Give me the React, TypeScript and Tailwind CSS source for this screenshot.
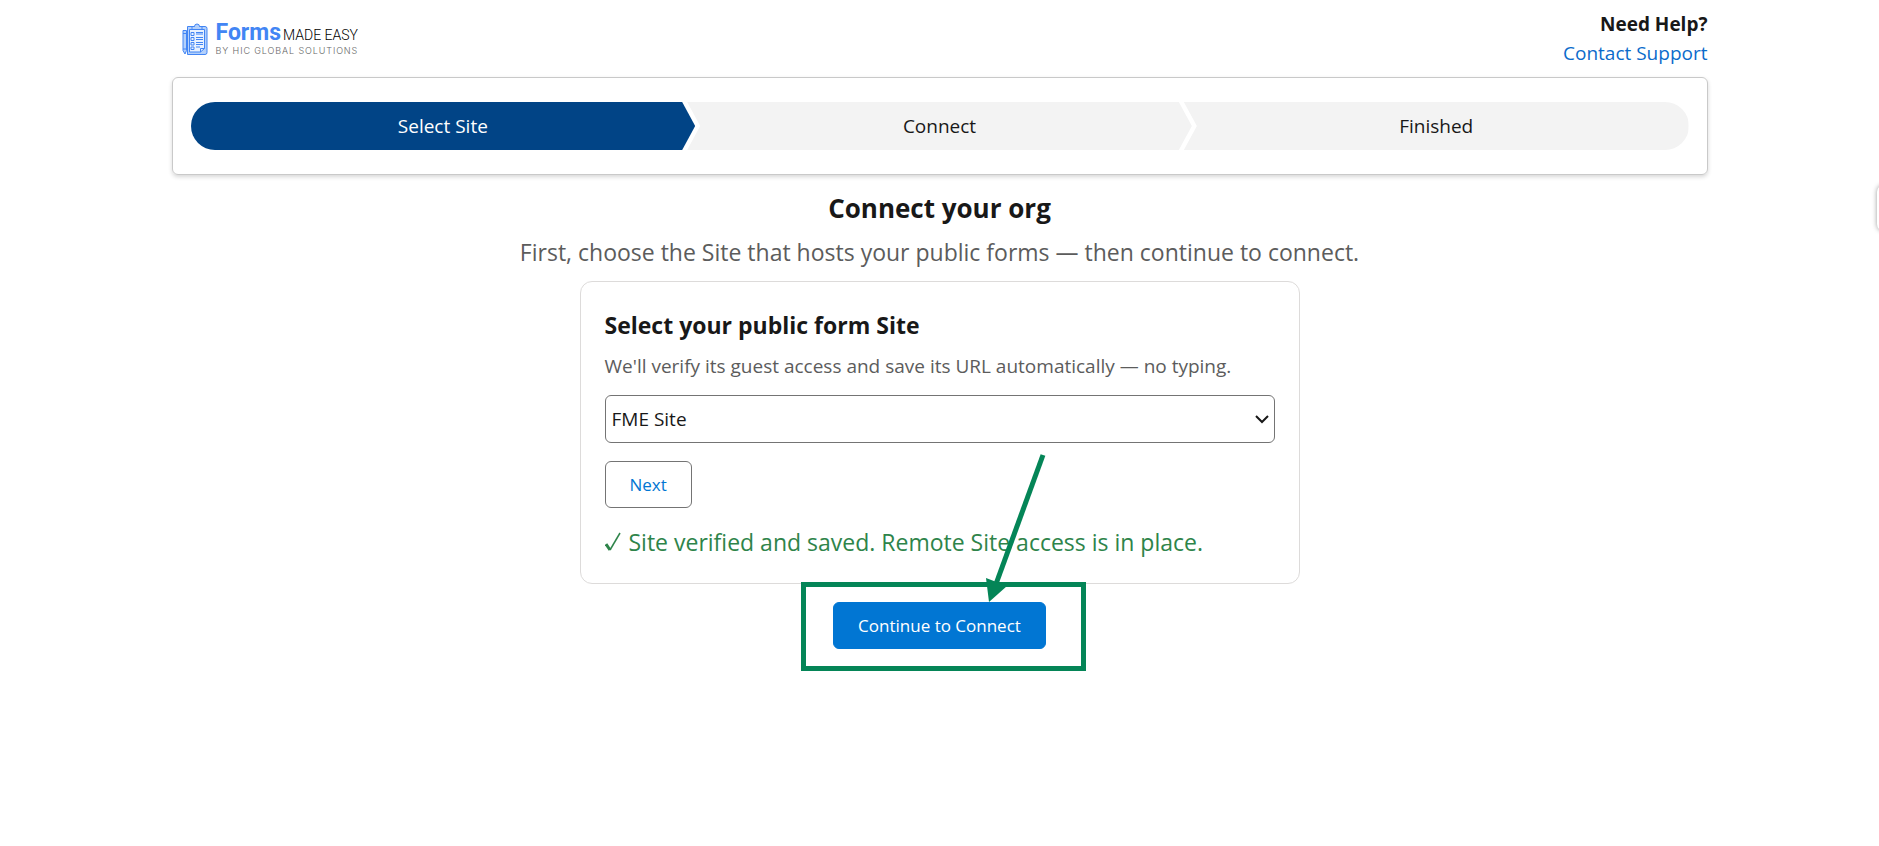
const steps = ["Select Site", "Connect", "Finished"];

const shapes = [
  "rounded-l-full bg-[#014486] text-white [clip-path:polygon(0_0,calc(100%-13px)_0,100%_50%,calc(100%-13px)_100%,0_100%)]",
  "-ml-2 bg-[#f3f3f3] text-[#181818] [clip-path:polygon(0_0,calc(100%-13px)_0,100%_50%,calc(100%-13px)_100%,0_100%,13px_50%)]",
  "-ml-2 rounded-r-full bg-[#f3f3f3] text-[#181818] [clip-path:polygon(0_0,100%_0,100%_100%,0_100%,13px_50%)]",
];

const Logo = () => {
  return (
    <a href="#" className="flex items-center gap-2">
      <svg width="26" height="33" viewBox="0 0 26 33" fill="none" stroke="#4285f4" aria-hidden="true">
        <path d="M5.500 3.500H23a2 2 0 0 1 2 2v24a2 2 0 0 1-2 2H5.500z" fill="#b3d0fb" />
        <path d="M7.500 6.500h15v19l-4 3.500h-11z" fill="#e8f1fe" />
        <path d="M18.500 29v-3.500h4" />
        <path d="M10 5.500v-2h2.500a2.500 2.500 0 0 1 5 0H20v3H10z" fill="#b3d0fb" />
        <path d="M1 7.500h3.500v20L3 31l-2-3.500z" fill="#b3d0fb" />
        <path d="M1 10.500h3.500M1 26h3.500" />
        <path d="M9 9.500h3v3H9zM9 14.500h3v3H9zM9 19.500h3v2.500H9zM9 24h3v2.500H9z" />
        <path d="M14 9.500h7M14 11h7M14 14.500h7M14 16.500h7M14 19.500h7M14 21.500h7M14 24h4" />
      </svg>
      <span className="font-['Roboto']">
        <span className="flex items-baseline gap-0.5 leading-6">
          <span className="text-[23px] font-bold text-[#4285f4]">Forms</span>
          <span className="text-sm font-light text-black">MADE EASY</span>
        </span>
        <span className="block font-['Inter'] text-[9px] leading-3 font-light tracking-widest text-[#666]">
          BY HIC GLOBAL SOLUTIONS
        </span>
      </span>
    </a>
  );
};

const App = () => {
  return (
    <div className="relative min-h-screen overflow-x-clip bg-white font-['Open_Sans','Noto_Sans',sans-serif] text-[#181818]">
      <div className="mx-auto max-w-[1536px]">
        <header className="flex items-center justify-between pt-2.5 pb-[9px]">
          <div className="pl-2.5">
            <Logo />
          </div>
          <div className="text-right text-[19px] leading-[29px]">
            <p className="font-bold">Need Help?</p>
            <a href="#" className="text-[#0b6bcb]">
              Contact Support
            </a>
          </div>
        </header>

        <nav className="rounded-md border border-[#c9c9c9] px-[18px] py-6 shadow-[0_2px_4px_rgba(0,0,0,0.16)]">
          <ol className="flex">
            {steps.map((step, i) => (
              <li key={step} className={`flex h-12 flex-1 items-center justify-center text-[19px] ${shapes[i]}`}>
                {step}
              </li>
            ))}
          </ol>
        </nav>

        <main className="flex flex-col items-center pt-[15px]">
          <h1 className="text-[26px] leading-9 font-bold">Connect your org</h1>
          <p className="mt-2.5 mb-[13px] text-[23px] leading-8 text-[#5c5c5c]">
            First, choose the Site that hosts your public forms — then continue to connect.
          </p>

          <section className="w-full max-w-[720px] rounded-xl border border-[#dddbda] px-6 pt-[23px] pb-[23px]">
            <h2 className="text-[23px] leading-10 font-bold">Select your public form Site</h2>
            <label htmlFor="site" className="mt-1 block text-[19px] leading-[34px] text-[#5c5c5c]">
              We'll verify its guest access and save its URL automatically — no typing.
            </label>
            <div className="relative mt-3">
              <select
                id="site"
                className="block h-12 w-full appearance-none rounded-md border border-[#747474] bg-white px-1.5 text-[19px]"
              >
                <option>FME Site</option>
              </select>
              <svg
                className="pointer-events-none absolute top-5 right-1.5"
                width="14"
                height="9"
                viewBox="0 0 14 9"
                fill="none"
                stroke="#181818"
                strokeWidth="2"
                aria-hidden="true"
              >
                <path d="M1 1l6 6 6-6" />
              </svg>
            </div>
            <button className="mt-[18px] block h-[47px] rounded-md border border-[#747474] px-6 text-[17px] text-[#0176d3]">
              Next
            </button>
            <p className="mt-4 flex items-center gap-2 text-[23px] leading-9 text-[#2e844a]">
              <svg width="16" height="20" viewBox="0 0 16 20" fill="none" stroke="#2e844a" aria-hidden="true">
                <path d="M1 12l4 6" strokeWidth="3" />
                <path d="M5 18L15 1" strokeWidth="1.500" />
              </svg>
              Site verified and saved. Remote Site access is in place.
            </p>
          </section>

          <div className="relative mt-[18px]">
            <button className="h-[47px] rounded-md border border-[#0176d3] bg-[#0176d3] px-6 text-[17px] text-white">
              Continue to Connect
            </button>
            <div className="pointer-events-none absolute -top-5 -right-10 -bottom-[22px] -left-8 border-[5px] border-[#048557]" />
            <svg
              className="pointer-events-none absolute right-0 bottom-full"
              width="61"
              height="148"
              viewBox="0 0 61 148"
              aria-hidden="true"
            >
              <path d="M58 1L11 130" stroke="#048557" strokeWidth="5" />
              <path d="M1 124l21 8L4 148z" fill="#048557" />
            </svg>
          </div>
        </main>
      </div>

      <div className="absolute top-[185px] -right-3 h-[46px] w-[14px] rounded-lg bg-white shadow-[0_0_5px_rgba(0,0,0,0.4)]" />
    </div>
  );
};

export default App;
